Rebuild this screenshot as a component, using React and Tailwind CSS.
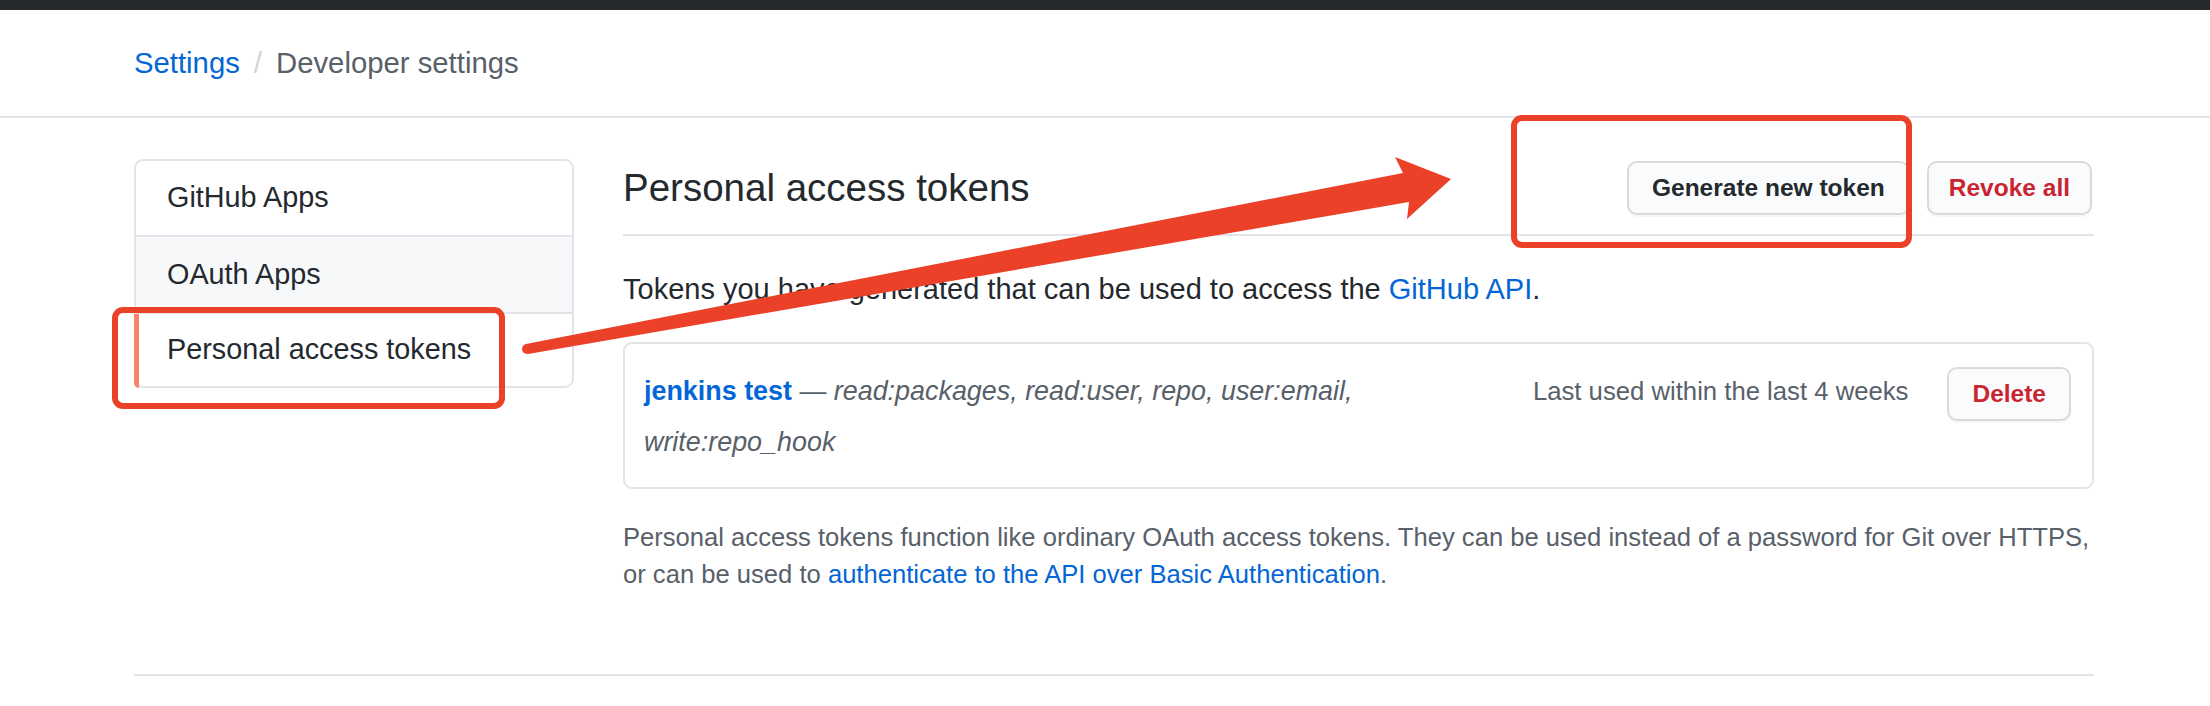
export default function App() {
  const btn =
    "h-[54px] rounded-[10px] border-2 border-[#d8dadc] bg-[#fafbfc] text-[24.5px] font-bold shadow-[0_2px_0_rgba(27,31,35,0.04)] whitespace-nowrap";
  return (
    <div className="relative w-[2210px] h-[706px] overflow-hidden bg-white font-['Liberation_Sans',Arial,sans-serif] text-[#24292e]">
      <div className="h-[10px] bg-[#24292e]" />
      <header className="h-[108px] border-b-2 border-[#e1e4e8] flex items-center pl-[134px] text-[29.3px]">
        <a className="text-[#0366d6]">Settings</a>
        <span className="mx-[14px] text-[#d1d5da]">/</span>
        <span className="text-[#586069]">Developer settings</span>
      </header>

      <div className="ml-[134px] w-[1960px] flex items-start">
        <nav className="w-[440px] mt-[41px] border-2 border-[#e1e4e8] rounded-[9px] text-[28.8px]">
          <div className="h-[74px] flex items-center pl-[31px]">GitHub Apps</div>
          <div className="h-[77px] flex items-center pl-[31px] border-t-2 border-[#e1e4e8] bg-[#f6f8fa]">
            OAuth Apps
          </div>
          <div className="relative h-[74px] flex items-center pl-[31px] border-t-2 border-[#e1e4e8]">
            <span className="absolute -left-[2px] top-0 -bottom-[2px] w-[5px] bg-[#f9826c] rounded-bl-[8px]" />
            Personal access tokens
          </div>
        </nav>

        <main className="ml-[49px] flex-1 min-w-0">
          <div className="mt-[41px] flex items-center pb-[17px] border-b-2 border-[#e1e4e8]">
            <h2 className="flex-1 text-[38.5px] leading-[58px] font-normal">Personal access tokens</h2>
            <button className={btn + " px-[23px] text-[#24292e]"}>Generate new token</button>
            <button className={btn + " px-[20px] ml-[17px] mr-[2px] text-[#cb2431]"}>Revoke all</button>
          </div>

          <p className="mt-[32px] text-[29px] leading-[43px]">
            Tokens you have generated that can be used to access the{" "}
            <a className="text-[#0366d6]">GitHub API</a>.
          </p>

          <div className="mt-[31px] border-2 border-[#e1e4e8] rounded-[9px] pl-[19px] pr-[21px] pt-[22px] pb-[19px] flex items-start">
            <div className="flex-1 min-w-0 text-[26.9px] leading-[51px]">
              <a className="font-bold text-[#0366d6]">jenkins test</a>
              <span className="text-[#586069]">
                {" — "}
                <em>read:packages, read:user, repo, user:email, write:repo_hook</em>
              </span>
            </div>
            <span className="text-[25.7px] leading-[51px] text-[#586069] whitespace-nowrap">
              Last used within the last 4 weeks
            </span>
            <button className={btn + " px-[23px] ml-[39px] mt-px text-[#cb2431]"}>Delete</button>
          </div>

          <p className="mt-[30px] w-[1470px] text-[25.6px] leading-[37px] text-[#586069]">
            Personal access tokens function like ordinary OAuth access tokens. They can be used instead of a
            password for Git over HTTPS, or can be used to{" "}
            <a className="text-[#0366d6]">authenticate to the API over Basic Authentication</a>.
          </p>
        </main>
      </div>

      <div className="ml-[134px] w-[1960px] mt-[81px] border-t-2 border-[#e1e4e8]" />

      <svg
        className="absolute inset-0 pointer-events-none"
        width="2210"
        height="706"
        viewBox="0 0 2210 706"
      >
        <rect x="115" y="310" width="387" height="96" rx="8" fill="none" stroke="#ea4128" strokeWidth="6" />
        <rect x="1514" y="118" width="395" height="127" rx="8" fill="none" stroke="#ea4128" strokeWidth="6" />
        <polygon
          points="526,344 1403,173 1395,157 1451,179 1407,219 1409,202 528,354"
          fill="#ea4128"
        />
        <circle cx="527" cy="349" r="5" fill="#ea4128" />
      </svg>
    </div>
  );
}
